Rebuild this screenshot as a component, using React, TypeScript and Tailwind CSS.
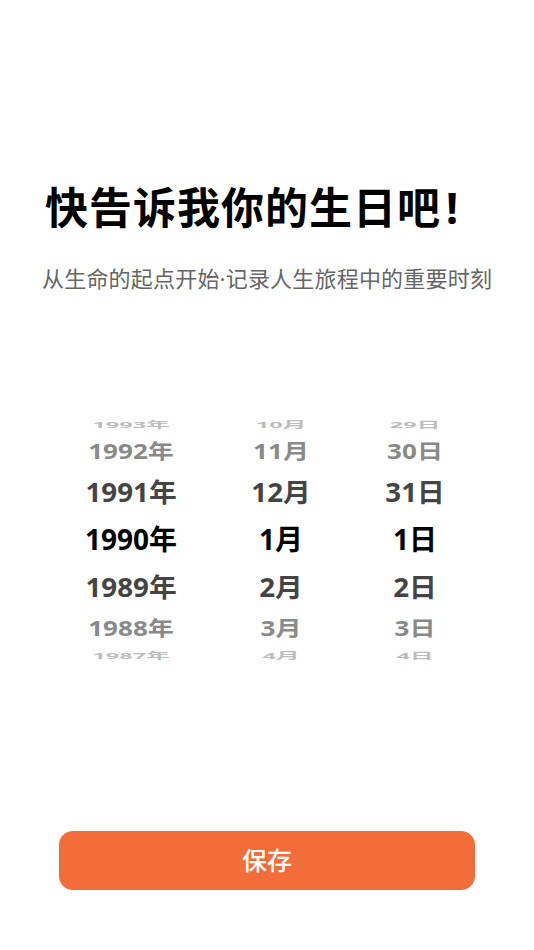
import React from 'react';

const FONT = { fontFamily: '"Noto Sans", "Noto Sans CJK SC", sans-serif' };

// wheel rows, top to bottom; index 3 is the selected one
const ROWS = [
    { h: 'h-[19px]', t: 'scale-x-[0.84] scale-y-[0.34]', c: 'text-[#bdbdbd]' },
    { h: 'h-[35px]', t: 'scale-x-[0.93] scale-y-[0.74]', c: 'text-[#8a8a8a]' },
    { h: 'h-[47px]', t: 'scale-x-[0.99] scale-y-[0.95]', c: 'text-[#444444]' },
    { h: 'h-[48px]', t: 'scale-100', c: 'text-black' },
    { h: 'h-[47px]', t: 'scale-x-[0.99] scale-y-[0.95]', c: 'text-[#444444]' },
    { h: 'h-[35px]', t: 'scale-x-[0.93] scale-y-[0.74]', c: 'text-[#8a8a8a]' },
    { h: 'h-[19px]', t: 'scale-x-[0.84] scale-y-[0.34]', c: 'text-[#bdbdbd]' },
];

const Wheel = ({ items, className }: { items: string[]; className: string }) => (
    <div className={`flex flex-col ${className}`}>
        {items.map((label, i) => (
            <div key={label} className={`${ROWS[i].h} flex items-center justify-center overflow-visible`}>
                <span className={`text-[28px] font-bold leading-none whitespace-nowrap ${ROWS[i].t} ${ROWS[i].c}`}>
                    {label}
                </span>
            </div>
        ))}
    </div>
);

export default function App() {
    return (
        <div className="w-[534px] h-[950px] bg-white flex flex-col" style={FONT}>
            {/* Heading */}
            <h1 className="mt-[186px] pl-[45px] text-[43px] font-bold leading-[44px] text-black tracking-[1px] whitespace-nowrap">
                快告诉我你的生日吧<span className="ml-[5px]">!</span>
            </h1>
            <p className="mt-[36px] pl-[42px] text-[22px] leading-[24px] text-[#666666] tracking-[0.2px] whitespace-nowrap">
                从生命的起点开始·记录人生旅程中的重要时刻
            </p>

            {/* Date picker */}
            <div className="mt-[124px] flex pl-[62px]">
                <Wheel className="w-[138px]" items={['1993年', '1992年', '1991年', '1990年', '1989年', '1988年', '1987年']} />
                <Wheel className="w-[162px]" items={['10月', '11月', '12月', '1月', '2月', '3月', '4月']} />
                <Wheel className="w-[106px]" items={['29日', '30日', '31日', '1日', '2日', '3日', '4日']} />
            </div>

            {/* Save */}
            <div className="mt-auto mb-[60px] px-[59px]">
                <button className="w-full h-[59px] rounded-[14px] bg-[#f36d3a] text-white text-[25px] font-medium">
                    保存
                </button>
            </div>
        </div>
    );
}
